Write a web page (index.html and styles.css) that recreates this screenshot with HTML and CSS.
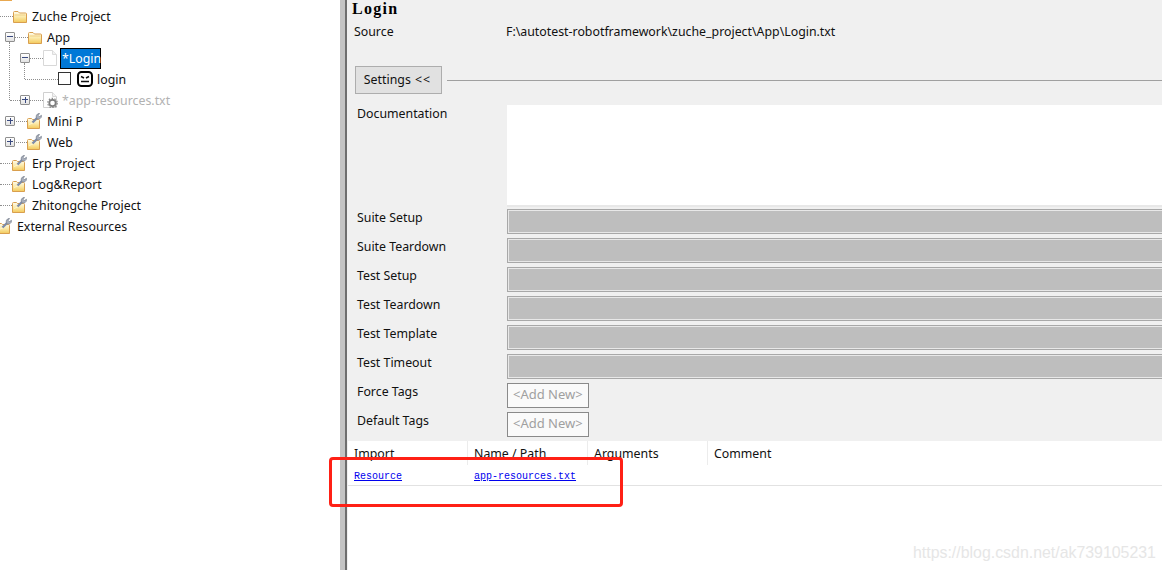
FILE: index.html
```html
<!DOCTYPE html>
<html lang="en">
<head>
<meta charset="utf-8">
<title>Login</title>
<link rel="stylesheet" href="styles.css">
</head>
<body>
<svg class="defs" width="0" height="0" aria-hidden="true">
  <defs>
    <linearGradient id="fold" x1="0" y1="0" x2="0" y2="1">
      <stop offset="0" stop-color="#fffdf0"/>
      <stop offset="0.5" stop-color="#fbe9a8"/>
      <stop offset="1" stop-color="#f3c95a"/>
    </linearGradient>
    <symbol id="folder" viewBox="0 0 14 12">
      <path d="M.5 11.500V1.500q0-1 1-1h3.500l1.500 1.500h6q1 0 1 1v8.500z" fill="url(#fold)" stroke="#d99f4e"/>
      <path d="M1.500 4h11" stroke="#f0cf80"/>
    </symbol>
    <symbol id="wfolder" viewBox="0 0 15 16">
      <path d="M.5 15.500V6.500q0-1 1-1h3l1 1h6q1 0 1 1v8z" fill="url(#fold)" stroke="#d99f4e"/>
      <path d="M2 11.500l6-2.500 1.500-2" fill="none" stroke="#fff6d0"/>
      <path d="M5.500 9.500l5-5" stroke="#7f8ca8" stroke-width="2.400"/>
      <path d="M9.500 5.500q-1.200-3 1-4.500l2-.8-1.300 2.500 1 1 2.300-1.400q.3 2.400-1.700 3.500-1.500.7-3.300-.3z" fill="#a9afbc" stroke="#78818f" stroke-width=".7"/>
    </symbol>
    <symbol id="doc" viewBox="0 0 14 16">
      <path d="M.5.500h9l4 4v11h-13z" fill="#fff" stroke="#d8d8d8"/>
      <path d="M9.500.500v4h4" fill="#f2f2f2" stroke="#dcdcdc"/>
    </symbol>
    <symbol id="docgear" viewBox="0 0 15 16">
      <path d="M.5.500h9l4 4v11h-13z" fill="#fff" stroke="#d0d0d0"/>
      <path d="M9.500.500v4h4" fill="#f2f2f2" stroke="#d8d8d8"/>
      <circle cx="9.500" cy="11" r="3.200" fill="none" stroke="#7d7d7d" stroke-width="1.800"/>
      <circle cx="9.500" cy="11" r="4.700" fill="none" stroke="#8a8a8a" stroke-width="1.300" stroke-dasharray="1.500 1.450"/>
    </symbol>
    <symbol id="robot" viewBox="0 0 16 16">
      <rect x="1" y="1" width="14" height="14" rx="3.500" fill="#fff" stroke="#000" stroke-width="2"/>
      <path d="M4 5.500l3 1.500M12 5.500l-3 1.500M4 10.500h8" fill="none" stroke="#111" stroke-width="1.500"/>
    </symbol>
  </defs>
</svg>
<div class="app">
  <nav class="tree">
    <div class="tree-cap"></div>
    <span class="vline vline-root"></span>
    <span class="vline vline-login"></span>
    <div class="row"><span class="dots w13"></span><svg class="ico i14"><use href="#folder"/></svg><span class="label">Zuche Project</span></div>
    <div class="row p5"><span class="exp minus"></span><span class="dots w14"></span><svg class="ico i14"><use href="#folder"/></svg><span class="label">App</span></div>
    <div class="row p20"><span class="exp minus"></span><span class="dots w14"></span><svg class="ico doc"><use href="#doc"/></svg><span class="selected">*Login</span></div>
    <div class="row p25"><span class="dots w33"></span><span class="check"></span><svg class="ico robot"><use href="#robot"/></svg><span class="label near">login</span></div>
    <div class="row p10"><span class="dots w10"></span><span class="exp plus"></span><span class="dots w14"></span><svg class="ico doc2"><use href="#docgear"/></svg><span class="label near muted">*app-resources.txt</span></div>
    <div class="row p5"><span class="exp plus"></span><span class="dots w13"></span><svg class="ico wf"><use href="#wfolder"/></svg><span class="label">Mini P</span></div>
    <div class="row p5"><span class="exp plus"></span><span class="dots w13"></span><svg class="ico wf"><use href="#wfolder"/></svg><span class="label">Web</span></div>
    <div class="row"><span class="dots w12"></span><svg class="ico wf"><use href="#wfolder"/></svg><span class="label">Erp Project</span></div>
    <div class="row"><span class="dots w12"></span><svg class="ico wf"><use href="#wfolder"/></svg><span class="label">Log&amp;Report</span></div>
    <div class="row"><span class="dots w12"></span><svg class="ico wf"><use href="#wfolder"/></svg><span class="label">Zhitongche Project</span></div>
    <div class="row outdent"><svg class="ico wf"><use href="#wfolder"/></svg><span class="label">External Resources</span></div>
  </nav>
  <div class="splitter"></div>
  <main class="main">
    <h1 class="title">Login</h1>
    <div class="source"><span class="source-label">Source</span><span>F:\autotest-robotframework\zuche_project\App\Login.txt</span></div>
    <div class="settings"><button class="settings-btn">Settings <span class="chev">&lt;&lt;</span></button><span class="rule"></span></div>
    <div class="form">
      <div class="doc-row"><span class="form-label">Documentation</span><div class="doc-box"></div></div>
      <div class="form-row"><span class="form-label">Suite Setup</span><div class="field"></div></div>
      <div class="form-row"><span class="form-label">Suite Teardown</span><div class="field"></div></div>
      <div class="form-row"><span class="form-label">Test Setup</span><div class="field"></div></div>
      <div class="form-row"><span class="form-label">Test Teardown</span><div class="field"></div></div>
      <div class="form-row"><span class="form-label">Test Template</span><div class="field"></div></div>
      <div class="form-row"><span class="form-label">Test Timeout</span><div class="field"></div></div>
      <div class="form-row"><span class="form-label">Force Tags</span><div class="add-new">&lt;Add New&gt;</div></div>
      <div class="form-row"><span class="form-label">Default Tags</span><div class="add-new">&lt;Add New&gt;</div></div>
    </div>
    <section class="imports">
      <div class="thead"><span class="th">Import</span><span class="th">Name / Path</span><span class="th">Arguments</span><span class="th">Comment</span></div>
      <div class="tr"><a class="td" href="#">Resource</a><a class="td" href="#">app-resources.txt</a></div>
    </section>
  </main>
</div>
<div class="annotation"></div>
<div class="watermark">https://blog.csdn.net/ak739105231</div>
</body>
</html>
```
FILE: styles.css
```css
* { box-sizing: border-box; }
html, body { margin: 0; height: 100%; overflow: hidden; background: #fff; }
body { font-family: "Noto Sans", "Liberation Sans", sans-serif; font-size: 12.350px; color: #111; position: relative; }
.defs { position: absolute; }

.app { display: flex; width: 1162px; height: 570px; }

/* tree */
.tree { width: 340px; flex: none; position: relative; background: #fff; }
.tree-cap { width: 12px; height: 1px; margin-bottom: 4px; background: #e8a850; }
.row { height: 21px; display: flex; align-items: center; white-space: nowrap; }
.p5 { padding-left: 5px; }
.p10 { padding-left: 10px; }
.p20 { padding-left: 20px; }
.p25 { padding-left: 25px; }
.outdent { margin-left: -3px; }
.dots { height: 0; margin-top: 1px; border-top: 1px dotted #8e8e8e; flex: none; }
.w10 { width: 10px; }
.w12 { width: 12px; }
.w13 { width: 13px; }
.w14 { width: 14px; }
.w33 { width: 33px; }
.vline { position: absolute; width: 0; border-left: 1px dotted #8e8e8e; }
.vline-root { left: 9px; top: 42px; height: 58px; }
.vline-login { left: 24px; top: 63px; height: 16px; }
.exp { width: 10px; height: 10px; margin: 1px -1px 0 0; flex: none; border: 1px solid #8f8f8f; border-radius: 1px; background: linear-gradient(#fff, #e2e2e2); position: relative; }
.exp::before { content: ""; position: absolute; left: 1px; top: 3px; width: 6px; height: 2px; border-top: 1px solid #3a4a80; }
.plus::after { content: ""; position: absolute; left: 3.500px; top: 1px; width: 1px; height: 6px; background: #3a4a80; }
.ico { flex: none; display: block; }
.i14 { width: 14px; height: 12px; margin-top: 2px; }
.doc { width: 14px; height: 16px; margin-top: 1px; }
.doc2 { width: 15px; height: 16px; margin-top: 1px; }
.wf { width: 15px; height: 16px; margin-top: 1px; }
.robot { width: 16px; height: 16px; margin: 1px 0 0 6px; }
.check { width: 13px; height: 13px; flex: none; border: 1px solid #333; background: #fff; }
.label { margin: 2px 0 0 5px; line-height: 18px; }
.near { margin-left: 4px; }
.muted { color: #b2b2b2; }
.selected { margin: 2px 0 0 3px; height: 21px; padding: 0 1px; line-height: 19px; width: 41px; background: #0078d7; color: #fff; border: 1px solid #000; }

/* splitter */
.splitter { width: 8px; flex: none; background: linear-gradient(90deg, #c4c4c4 0, #c4c4c4 5px, #6e6e6e 5px, #6e6e6e 7px, #f0f0f0 7px); }

/* main */
.main { flex: 1; min-width: 0; overflow: hidden; background: #f0f0f0; display: flex; flex-direction: column; }
.title { margin: 1px 0 0 4px; height: 17px; font: bold 16px/16px "Liberation Serif", serif; letter-spacing: 1.300px; color: #000; }
.source { display: flex; height: 20px; margin: 3px 0 0 6px; line-height: 22px; }
.source-label { width: 152px; flex: none; }
.settings { display: flex; align-items: center; margin: 25px 0 0 7px; }
.settings-btn { width: 87px; height: 28px; padding: 0 2px 2px 0; font: inherit; color: #111; background: #e1e1e1; border: 1px solid #adadad; }
.chev { letter-spacing: 1px; margin-left: 1px; }
.rule { flex: 1; height: 1px; margin-left: 5px; background: #a0a0a0; }
.form { padding-left: 9px; margin-top: 11px; }
.form-label { width: 150px; flex: none; line-height: 18px; }
.doc-row { display: flex; height: 100px; }
.doc-box { flex: 1; background: #fff; box-shadow: 0 2px 0 #e8e8e8; }
.form-row { display: flex; height: 25px; margin-top: 4px; }
.field { flex: 1; margin-right: -4px; border: 1px solid #a8a8a8; background: #bebebe; box-shadow: inset 0 0 0 1px #e8e8e8; }
.add-new { width: 82px; height: 25px; border: 1px solid #8a8a8a; background: #fafafa; color: #a0a0a0; font-size: 13px; line-height: 21px; padding-left: 5px; white-space: nowrap; }

/* imports table */
.imports { flex: 1; margin-top: 4px; background: #fff; }
.thead { display: flex; height: 24px; }
.th { width: 120px; flex: none; padding-left: 6px; line-height: 26px; border-right: 1px solid #ececec; }
.th:last-child { border-right: 0; }
.tr { display: flex; height: 21px; padding-top: 4px; border-bottom: 1px solid #e2e2e2; align-items: center; }
.td { width: 120px; flex: none; padding-left: 6px; font: 10px/14px "Liberation Mono", monospace; color: #0000ee; text-decoration: underline; }

/* overlays */
.annotation { position: absolute; left: 329px; top: 457px; width: 294px; height: 50px; border: 3px solid #ff2015; border-radius: 4px; }
.watermark { position: absolute; left: 913px; top: 543px; font: 15.900px/20px "Liberation Sans", sans-serif; color: #e6e6e6; white-space: nowrap; }
```
